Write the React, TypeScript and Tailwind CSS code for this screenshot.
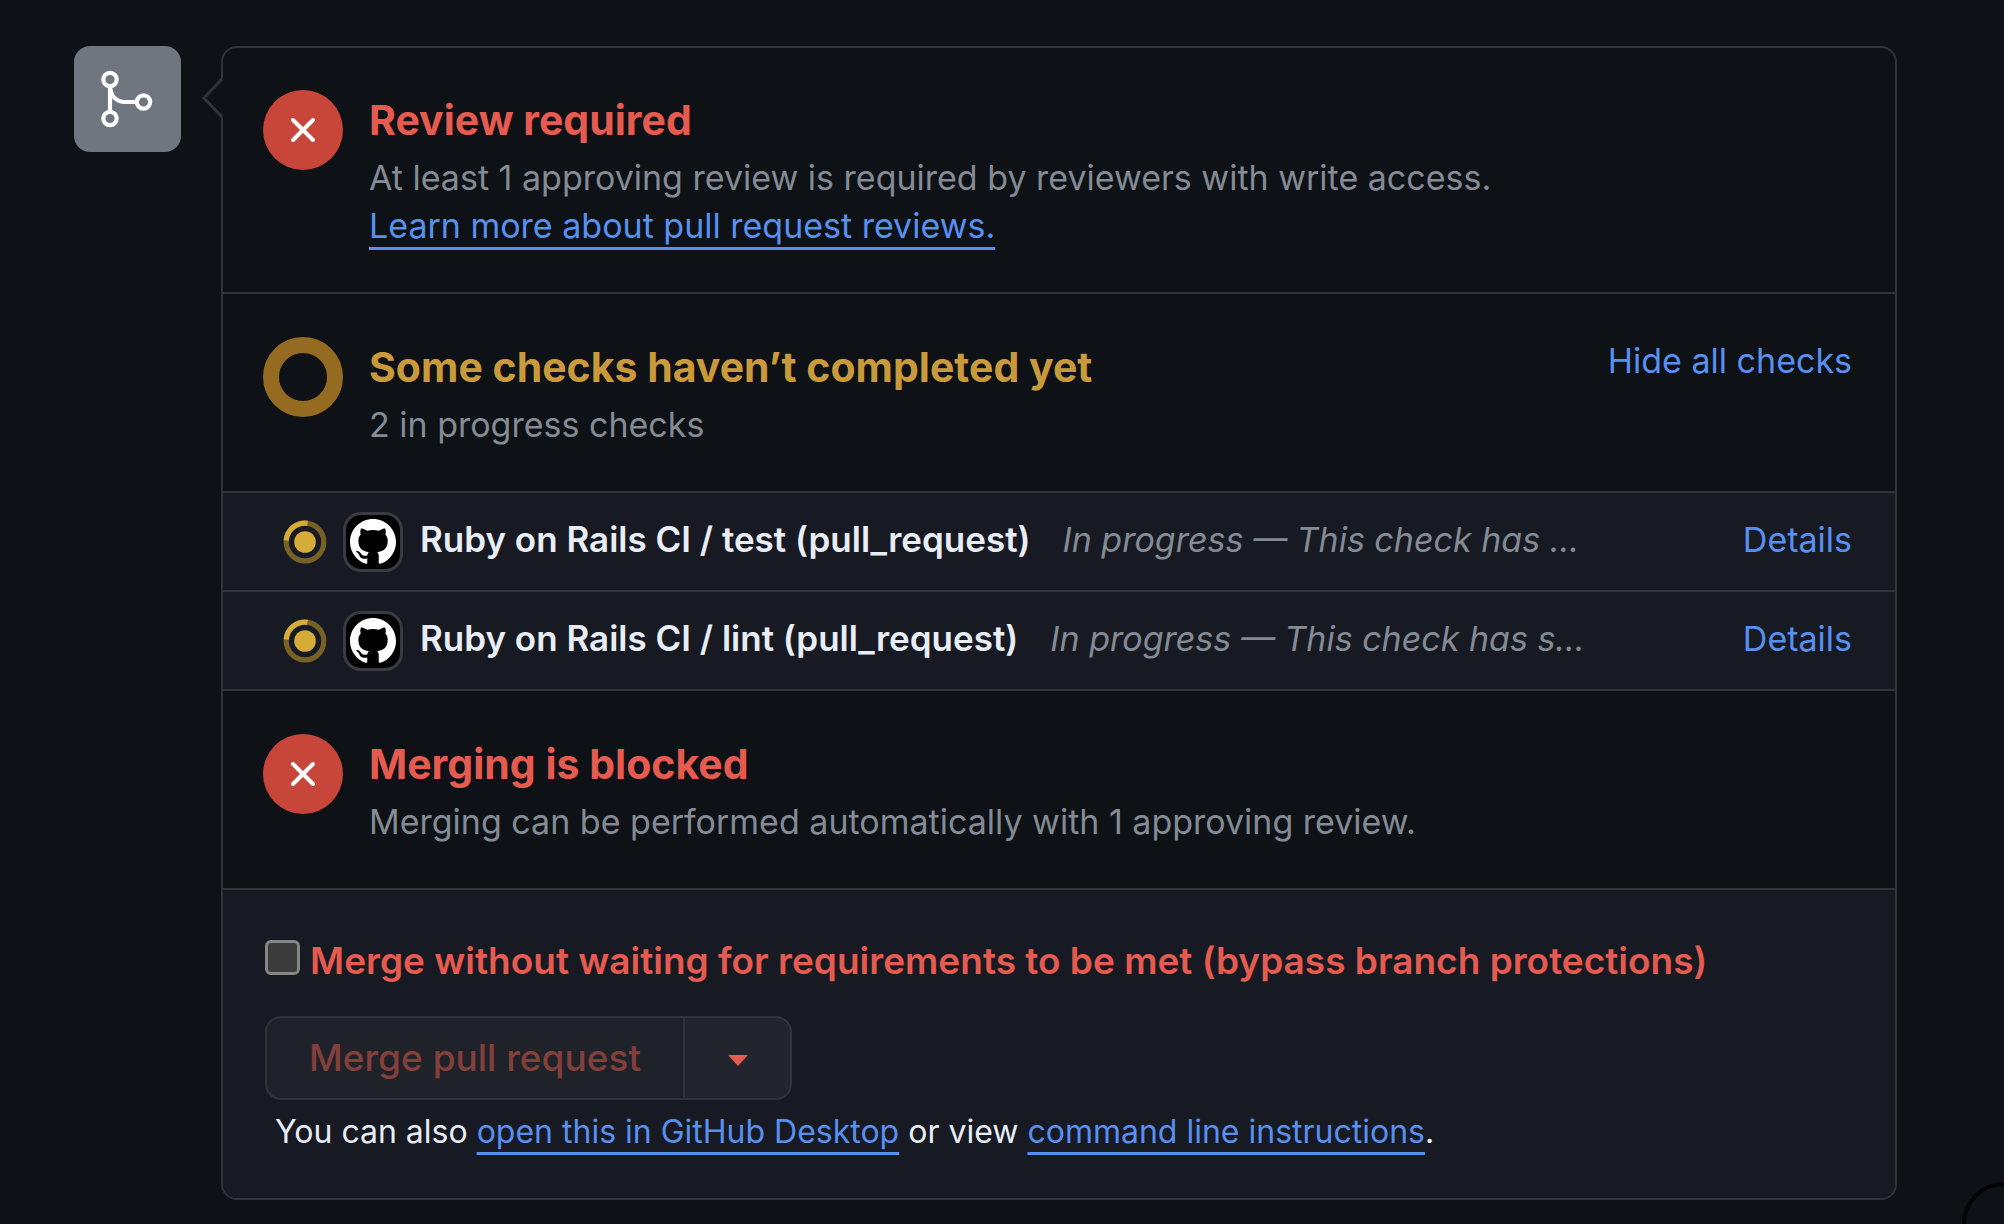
import React from "react";

function MergeIcon() {
  return (
    <svg viewBox="0 0 107 106" className="h-[106px] w-[107px]" fill="none" stroke="#fff" strokeWidth="4.2" aria-hidden="true">
      <circle cx="36" cy="33.5" r="6.7" />
      <circle cx="36" cy="72.5" r="6.7" />
      <circle cx="69.5" cy="56" r="6.7" />
      <path d="M36 40v26" />
      <path d="M36 41c1 9 6 15 15 15h12" />
    </svg>
  );
}

function BlockedIcon() {
  return (
    <span className="flex size-20 shrink-0 items-center justify-center rounded-full bg-[#c8453a]">
      <svg viewBox="0 0 26 26" className="size-[26px]" fill="none" stroke="#fff" strokeWidth="4" strokeLinecap="round" aria-hidden="true">
        <path d="M3 3l20 20M23 3L3 23" />
      </svg>
    </span>
  );
}

function ProgressIcon() {
  return (
    <svg viewBox="0 0 44 44" className="size-11 shrink-0" fill="none" aria-label="In progress" role="img">
      <circle cx="22" cy="22" r="18.8" stroke="#766226" strokeWidth="5.2" />
      <path d="M3.2 20.5A18.8 18.8 0 0 1 24.5 3.3" stroke="#d5ac3a" strokeWidth="5.2" />
      <circle cx="22" cy="22" r="10.8" fill="#d5ac3a" />
    </svg>
  );
}

function AppAvatar() {
  return (
    <span className="flex size-[60px] shrink-0 items-center justify-center rounded-[18px] border-[3px] border-[#383c42] bg-black">
      <svg viewBox="0 0 16 16" className="size-[46px]" fill="#fff" aria-hidden="true">
        <path d="M8 0C3.58 0 0 3.58 0 8c0 3.54 2.29 6.53 5.47 7.59.4.07.55-.17.55-.38 0-.19-.01-.82-.01-1.49-2.01.37-2.53-.49-2.69-.94-.09-.23-.48-.94-.82-1.13-.28-.15-.68-.52-.01-.53.63-.01 1.08.58 1.23.82.72 1.21 1.87.87 2.33.66.07-.52.28-.87.51-1.07-1.78-.2-3.64-.89-3.64-3.95 0-.87.31-1.59.82-2.15-.08-.2-.36-1.02.08-2.12 0 0 .67-.21 2.2.82.64-.18 1.32-.27 2-.27s1.36.09 2 .27c1.53-1.04 2.2-.82 2.2-.82.44 1.1.16 1.92.08 2.12.51.56.82 1.27.82 2.15 0 3.07-1.87 3.75-3.65 3.95.29.25.54.73.54 1.48 0 1.07-.01 1.93-.01 2.2 0 .21.15.46.55.38A8.01 8.01 0 0 0 16 8c0-4.42-3.58-8-8-8z" />
      </svg>
    </span>
  );
}

const underlined =
  "text-[#5890f0] underline decoration-[3px] underline-offset-[9px] [text-decoration-skip-ink:none]";

function CheckRow({ name, status }: { name: string; status: string }) {
  return (
    <li className="flex h-[99px] items-center border-t-2 border-[#303439] bg-[#171a22] pr-[43px] pl-[60px] text-[34px] leading-[48px]">
      <ProgressIcon />
      <span className="ml-4 flex">
        <AppAvatar />
      </span>
      <span className="ml-[17px] flex min-w-0 flex-1 items-baseline gap-8 pb-1 whitespace-nowrap">
        <strong className="text-[35px] font-semibold text-[#e9edf6]">{name}</strong>
        <em className="text-[#848b94]">{status}</em>
      </span>
      <a href="#details" className="pb-1 text-[#5890f0]">Details</a>
    </li>
  );
}

export default function App() {
  return (
    <main className="relative flex min-h-screen items-start overflow-hidden bg-[#0e1116] pt-[46px] pr-[107px] pl-[74px] font-['Inter',sans-serif] text-[34px] leading-[48px] text-[#e9edf6]">
      <div className="mr-10 shrink-0 rounded-2xl bg-[#6f7680]">
        <MergeIcon />
      </div>

      <section className="relative min-w-0 flex-1 rounded-2xl border-2 border-[#303439]">
        <svg viewBox="0 0 22 44" className="absolute top-7 -left-[22px] h-11 w-[22px]" aria-hidden="true">
          <path d="M22 2L3 22l19 20z" fill="#0e1116" />
          <path d="M21 3L3 22l18 19" fill="none" stroke="#303439" strokeWidth="3" />
        </svg>

        <div className="flex gap-[26px] px-10 pt-[42px] pb-[42px]">
          <BlockedIcon />
          <div>
            <h2 className="mb-1 text-[41px] leading-[60px] font-bold text-[#e55b4f]">Review required</h2>
            <p className="text-[#848b94]">At least 1 approving review is required by reviewers with write access.</p>
            <p>
              <a href="#reviews" className={underlined}>Learn more about pull request reviews.</a>
            </p>
          </div>
        </div>

        <div className="flex gap-[26px] border-t-2 border-[#303439] pt-[43px] pr-[43px] pb-[42px] pl-10">
          <span className="size-20 shrink-0 rounded-full border-[16px] border-[#946b21]" />
          <div className="flex-1">
            <h2 className="mb-1 text-[41px] leading-[60px] font-bold text-[#c99a3c]">Some checks haven’t completed yet</h2>
            <p className="text-[#848b94]">2 in progress checks</p>
          </div>
          <button type="button" className="self-start text-[#5890f0]">Hide all checks</button>
        </div>

        <ul>
          <CheckRow name="Ruby on Rails CI / test (pull_request)" status="In progress — This check has …" />
          <CheckRow name="Ruby on Rails CI / lint (pull_request)" status="In progress — This check has s…" />
        </ul>

        <div className="flex gap-[26px] border-t-2 border-[#303439] px-10 pt-[43px] pb-[42px]">
          <BlockedIcon />
          <div>
            <h2 className="mb-1 text-[41px] leading-[60px] font-bold text-[#e55b4f]">Merging is blocked</h2>
            <p className="text-[#848b94]">Merging can be performed automatically with 1 approving review.</p>
          </div>
        </div>

        <div className="rounded-b-[14px] border-t-2 border-[#303439] bg-[#171a22] px-[42px] pt-[43px] pb-[42px]">
          <label className="flex items-center gap-[10px] text-[37px] leading-[56px] font-semibold text-[#e55b4f]">
            <input type="checkbox" className="mb-2 size-[35px] shrink-0 appearance-none rounded-md border-[3px] border-[#868686] bg-[#3b3b3b]" />
            Merge without waiting for requirements to be met (bypass branch protections)
          </label>
          <div className="mt-[27px] flex h-[84px] text-[37px] font-medium">
            <button type="button" disabled className="rounded-l-2xl border-2 border-[#303439] bg-[#20222a] px-[42px] text-[#83403b]">
              Merge pull request
            </button>
            <button type="button" aria-label="Select merge method" className="flex w-[107px] items-center justify-center rounded-r-2xl border-2 border-l-0 border-[#303439] bg-[#22252d]">
              <svg viewBox="0 0 20 12" className="mt-1 h-3 w-5" aria-hidden="true">
                <path d="M0 1h20L10 12z" fill="#e55b4f" />
              </svg>
            </button>
          </div>
          <p className="mt-2 pl-[10px] text-[32px]">
            You can also <a href="#desktop" className={underlined}>open this in GitHub Desktop</a> or view{" "}
            <a href="#cli" className={underlined}>command line instructions</a>.
          </p>
        </div>
      </section>

      <span className="absolute -right-[42px] -bottom-[42px] size-[84px] rounded-full border-4 border-[#030406]" />
    </main>
  );
}
